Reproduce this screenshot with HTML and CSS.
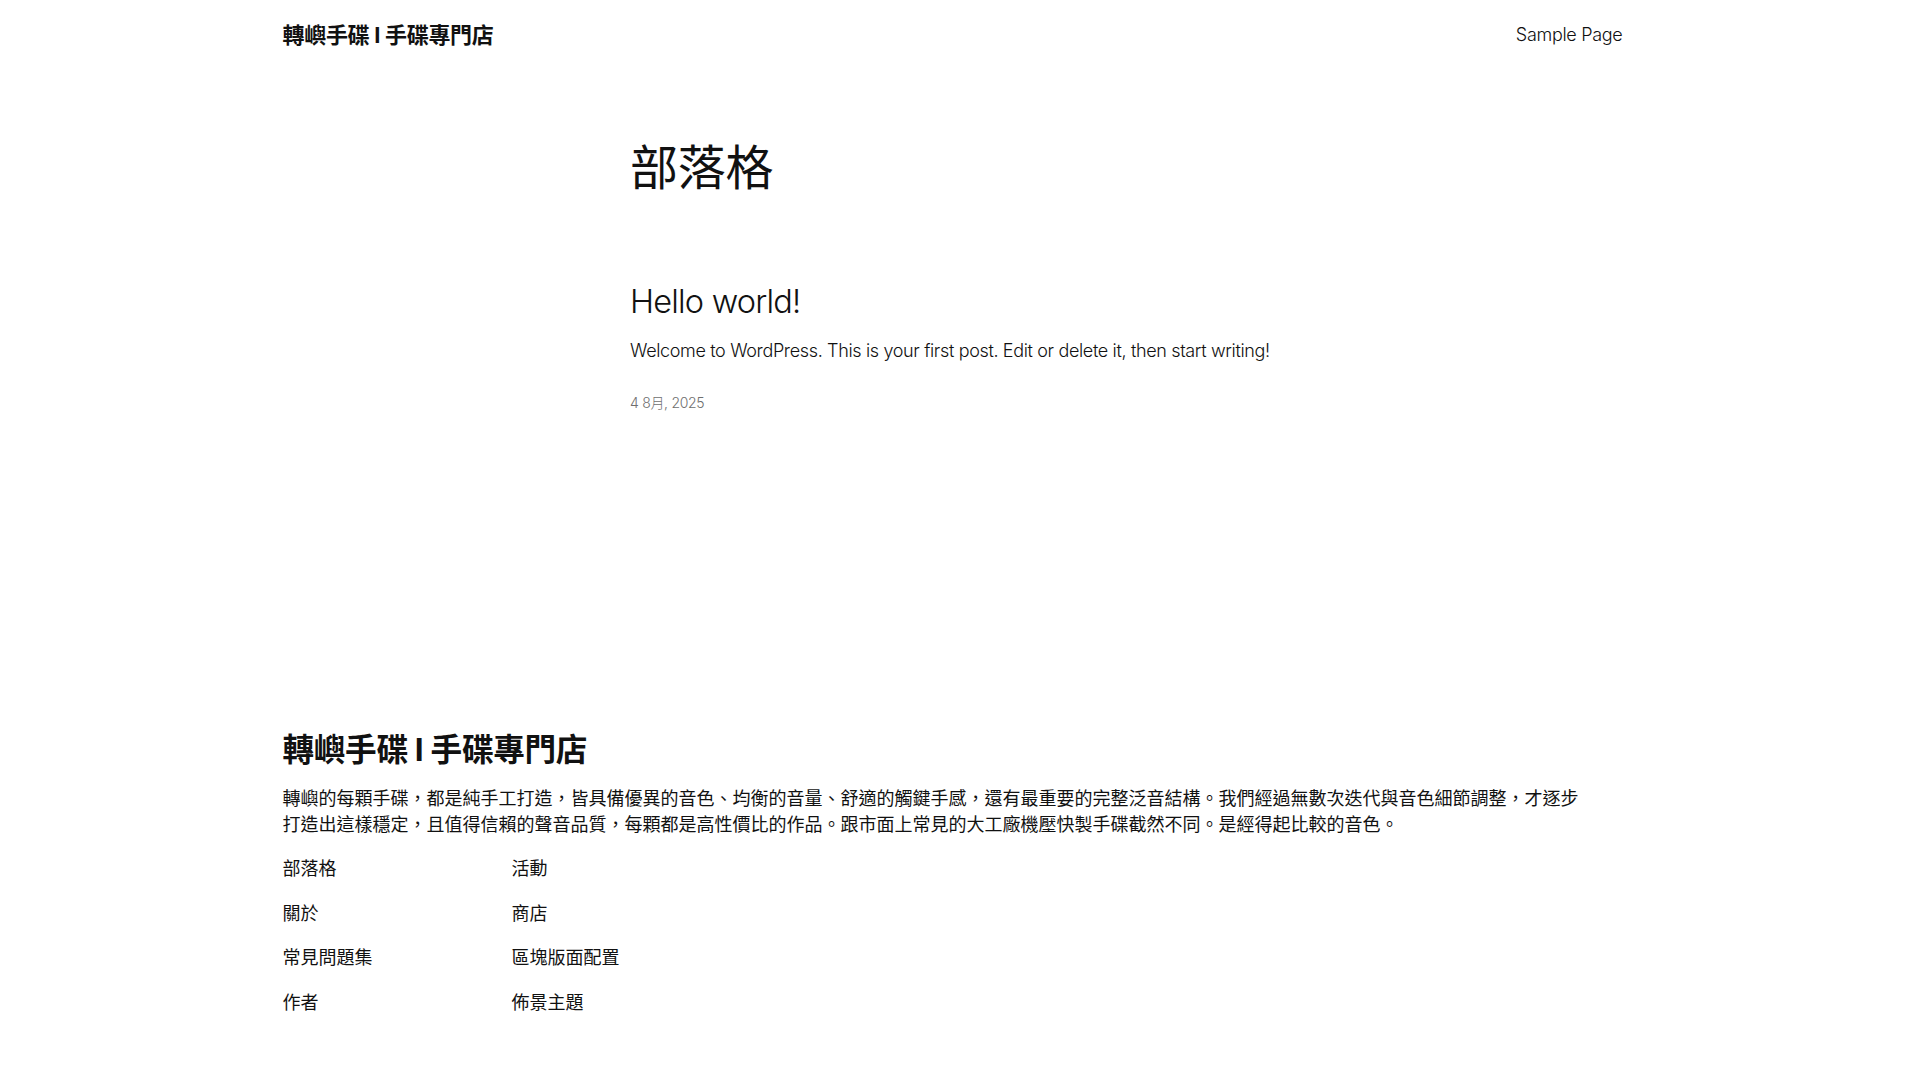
FILE: index.html
```html
<!DOCTYPE html>
<html lang="zh-Hant">
<head>
    <meta charset="utf-8" />
    <title>部落格 – 轉嶼手碟 I 手碟專門店</title>
    <link rel="stylesheet" href="styles.css">
</head>

<body>
<div class="site">
    <header class="site_header">
        <a class="site_title" href="javascript:;">轉嶼手碟 I 手碟專門店</a>
        <nav class="main_nav">
            <a href="javascript:;">Sample Page</a>
        </nav>
    </header>

    <main class="site_main">
        <h1 class="page_title">部落格</h1>
        <article class="post">
            <h2 class="post_title"><a href="javascript:;">Hello world!</a></h2>
            <p class="post_excerpt">Welcome to WordPress. This is your first post. Edit or delete it, then start writing!</p>
            <div class="post_date">4 8月, 2025</div>
        </article>
    </main>

    <footer class="site_footer">
        <h2 class="footer_title">轉嶼手碟 I 手碟專門店</h2>
        <p class="footer_desc">轉嶼的每顆手碟，都是純手工打造，皆具備優異的音色、均衡的音量、舒適的觸鍵手感，還有最重要的完整泛音結構。我們經過無數次迭代與音色細節調整，才逐步打造出這樣穩定，且值得信賴的聲音品質，每顆都是高性價比的作品。跟市面上常見的大工廠機壓快製手碟截然不同。是經得起比較的音色。</p>
        <ul class="footer_nav">
            <li><a href="javascript:;">部落格</a></li>
            <li><a href="javascript:;">活動</a></li>
            <li><a href="javascript:;">關於</a></li>
            <li><a href="javascript:;">商店</a></li>
            <li><a href="javascript:;">常見問題集</a></li>
            <li><a href="javascript:;">區塊版面配置</a></li>
            <li><a href="javascript:;">作者</a></li>
            <li><a href="javascript:;">佈景主題</a></li>
        </ul>
    </footer>
</div>
</body>
</html>
```

FILE: styles.css
```css
html, body{margin: 0;padding: 0;background: #fff;}
body{padding-right: 15px;font-family: "Inter", "Noto Sans CJK TC", sans-serif;color: #111;font-size: 18px;letter-spacing: -0.3px;}
a{color: inherit;text-decoration: none;}
.site{width: 1340px;margin: 0 auto;}

/*頁首*/
.site_header{display: flex;justify-content: space-between;align-items: center;padding: 23px 0 21px 0;}
.site_title{font-size: 22px;font-weight: 700;line-height: 24px;letter-spacing: -0.3px;}
.main_nav a{font-size: 18px;line-height: 24px;font-weight: 300;}

/*文章列表*/
.site_main{width: 645px;margin: 0 auto;}
.page_title{font-size: 48px;font-weight: 400;line-height: 58px;margin: 71px 0 0 0;}
.post{margin-top: 86px;}
.post_title{font-size: 32.5px;font-weight: 300;line-height: 38px;margin: 0;letter-spacing: -0.8px;}
.post_excerpt{font-size: 18px;font-weight: 300;line-height: 29px;margin: 15px 0 0 0;letter-spacing: -0.35px;}
.post_date{font-size: 14px;line-height: 20px;color: #6e6e6e;font-weight: 300;margin-top: 28px;}

/*頁尾*/
.site_footer{padding: 320px 0 200px 0;}
.footer_title{font-size: 31.6px;font-weight: 700;line-height: 34px;margin: 0;letter-spacing: -0.3px;}
.footer_desc{width: 1305px;font-size: 18px;line-height: 26px;margin: 19px 0 0 0;letter-spacing: 0;}
.footer_nav{list-style: none;margin: 19px 0 0 0;padding: 0;display: grid;grid-template-columns: 229px auto;row-gap: 20.5px;}
.footer_nav li{font-size: 18px;line-height: 24px;letter-spacing: 0;}
```
